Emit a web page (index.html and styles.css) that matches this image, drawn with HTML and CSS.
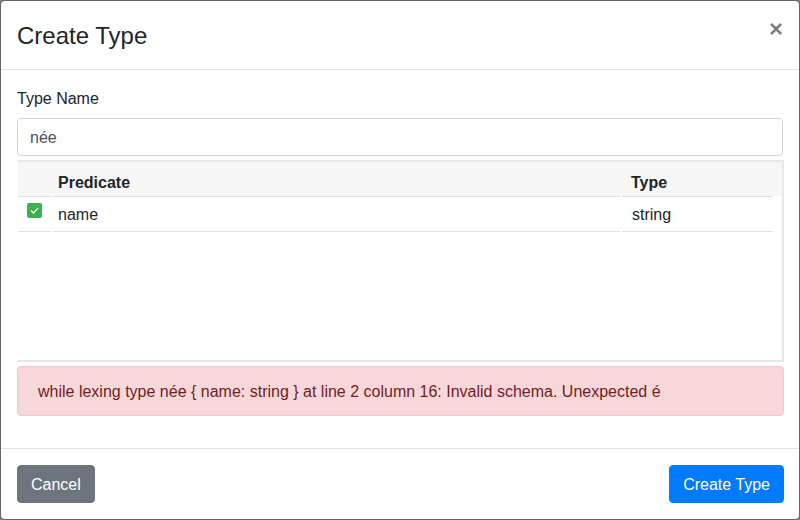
FILE: index.html
```html
<!DOCTYPE html>
<html>
<head>
<meta charset="utf-8">
<link rel="stylesheet" href="styles.css">
</head>
<body>
<div class="modal">
  <div class="modal-header">
    <h4 class="modal-title">Create Type</h4>
    <button class="close" type="button">×</button>
  </div>
  <div class="modal-body">
    <label class="label">Type Name</label>
    <div class="input">née</div>
    <div class="grid">
      <div class="row head">
        <div class="cell c1"></div>
        <div class="cell c2">Predicate</div>
        <div class="cell c3">Type</div>
      </div>
      <div class="row">
        <div class="cell c1"><span class="check"><svg width="15" height="15" viewBox="0 0 15 15"><path d="M4 7.5 L6.5 10 L11 5" fill="none" stroke="#fff" stroke-width="1.3"/></svg></span></div>
        <div class="cell c2">name</div>
        <div class="cell c3">string</div>
      </div>
    </div>
    <div class="alert">while lexing type née { name: string } at line 2 column 16: Invalid schema. Unexpected é</div>
  </div>
  <div class="modal-footer">
    <button class="btn btn-secondary" type="button">Cancel</button>
    <button class="btn btn-primary" type="button">Create Type</button>
  </div>
</div>
</body>
</html>
```
FILE: styles.css
```css
* { box-sizing: border-box; }
html, body { margin: 0; padding: 0; }
body {
  background: #808080;
  font-family: "Liberation Sans", Arial, sans-serif;
  font-size: 16px;
  line-height: 1.5;
  color: #212529;
}
.modal {
  width: 800px;
  height: 520px;
  background: #fff;
  border: 1px solid rgba(0,0,0,.2);
  border-radius: 5px;
  display: flex;
  flex-direction: column;
  background-clip: padding-box;
}
.modal-header {
  display: flex;
  align-items: flex-start;
  padding: 17px 16px 15px;
  border-bottom: 1px solid #dee2e6;
}
.modal-title {
  margin: 0;
  font-size: 24px;
  font-weight: 500;
  line-height: 1.5;
}
.close {
  margin: -17px -16px -15px auto;
  padding: 16px;
  background: transparent;
  border: 0;
  font-family: "Liberation Sans", Arial, sans-serif;
  font-size: 24px;
  font-weight: 700;
  line-height: 1;
  color: #000;
  opacity: .5;
  text-shadow: 0 1px 0 #fff;
}
.modal-body {
  flex: 1;
  padding: 16px;
  display: flex;
  flex-direction: column;
}
.label {
  display: block;
  padding-top: 1px;
  margin-bottom: 7px;
}
.input {
  height: 38px;
  padding: 7px 12px 5px;
  border: 1px solid #ced4da;
  border-radius: 4px;
  color: #495057;
  margin-bottom: 4px;
}
.grid {
  height: 202px;
  border: 2px solid #e6e8ea;
  border-left: 1px solid #fff;
  margin-bottom: 4px;
  padding-right: 10px;
  background: linear-gradient(#f7f7f7, #f7f7f7) no-repeat 0 0 / 100% 34px;
  margin-right: -1px;
}
.row {
  display: flex;
  gap: 2px;
}
.cell {
  border-bottom: 1px solid #dee2e6;
  padding: 6px 5px 4px;
  height: 35px;
}
.head .cell {
  background: #f7f7f7;
  font-weight: 700;
  padding: 9px 5px 1px;
  height: 35px;
}
.c1 { width: 33px; padding-left: 9px; padding-top: 6px; }
.c2 { flex: 1; }
.c3 { width: 150px; padding-left: 10px; }
.head .c3 { padding-left: 9px; }
.check {
  display: block;
  width: 15px;
  height: 15px;
  background: #3db14f;
  border-radius: 2px;
}
.check svg { display: block; }
.alert {
  padding: 13px 20px 11px;
  background: #f8d7da;
  border: 1px solid #f5c6cb;
  border-radius: 4px;
  color: #721c24;
  margin-right: -1px;
}
.modal-footer {
  display: flex;
  justify-content: space-between;
  padding: 16px 15px 16px 16px;
  border-top: 1px solid #dee2e6;
}
.btn {
  font-family: "Liberation Sans", Arial, sans-serif;
  font-size: 16px;
  line-height: 1.5;
  padding: 7px 13px 5px;
  border: 1px solid transparent;
  border-radius: 4px;
  color: #fff;
}
.btn-secondary { background: #6c757d; border-color: #6c757d; }
.btn-primary { background: #007bff; border-color: #007bff; }
```
